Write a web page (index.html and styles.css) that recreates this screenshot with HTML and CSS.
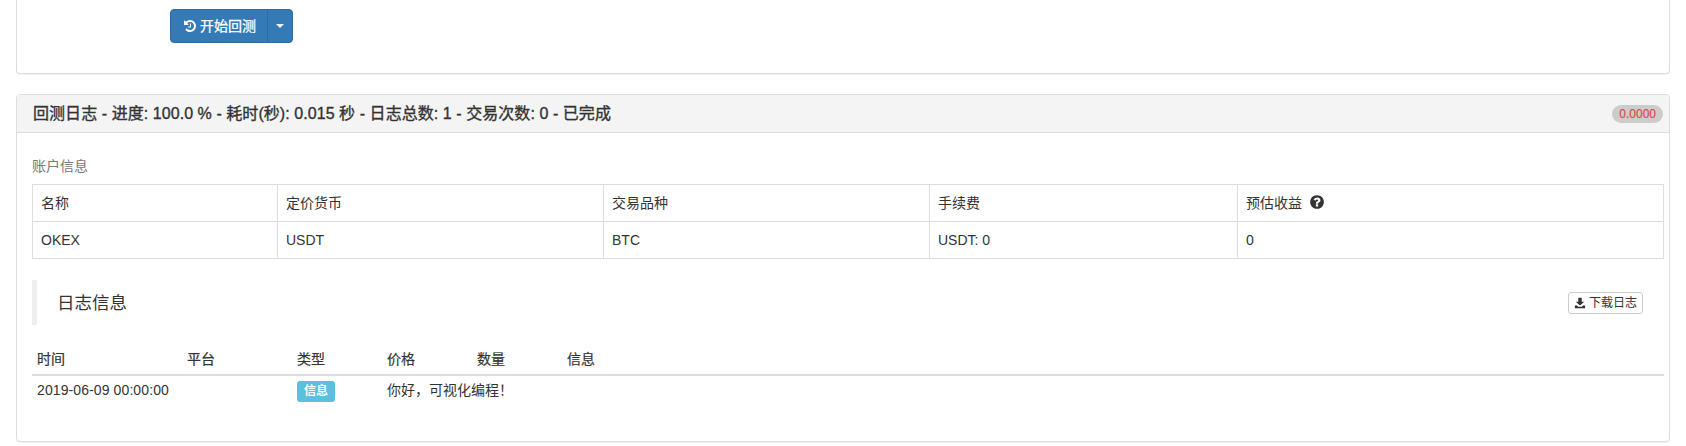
FILE: index.html
```html
<!DOCTYPE html>
<html lang="zh-CN">
<head>
<meta charset="utf-8">
<title>回测日志</title>
<link rel="stylesheet" href="styles.css">
</head>
<body>
<main class="page">
  <section class="panel panel-top">
    <div class="btn-group">
      <button class="btn btn-primary btn-main" type="button">
        <svg class="icon" viewBox="0 0 1792 1792" aria-hidden="true"><path fill="currentColor" d="M1664 896q0 156-61 298t-164 245-245 164-298 61q-172 0-327-72.5t-264-204.5q-7-10-6.5-22.5t8.5-20.5l137-138q10-9 25-9 16 2 23 12 73 95 179 147t225 52q104 0 198.5-40.5t163.5-109.5 109.5-163.5 40.5-198.5-40.5-198.5-109.5-163.5-163.5-109.5-198.5-40.5q-98 0-188 35.5t-160 101.5l137 138q31 30 14 69-17 40-59 40h-448q-26 0-45-19t-19-45v-448q0-42 40-59 39-17 69 14l130 129q107-101 244.5-156.5t284.5-55.5q156 0 298 61t245 164 164 245 61 298zm-640-288v448q0 14-9 23t-23 9h-320q-14 0-23-9t-9-23v-64q0-14 9-23t23-9h224v-352q0-14 9-23t23-9h64q14 0 23 9t9 23z"/></svg>
        开始回测
      </button>
      <button class="btn btn-primary btn-caret" type="button" aria-label="更多"><span class="caret"></span></button>
    </div>
  </section>

  <section class="panel">
    <header class="panel-heading">
      <h3 class="panel-title">回测日志 - 进度: 100.0 % - 耗时(秒): 0.015 秒 - 日志总数: 1 - 交易次数: 0 - 已完成</h3>
      <span class="badge">0.0000</span>
    </header>
    <div class="panel-body">
      <p class="caption">账户信息</p>
      <table class="account-table">
        <colgroup>
          <col class="col-a"><col class="col-b"><col class="col-c"><col class="col-d"><col>
        </colgroup>
        <tbody>
          <tr>
            <td>名称</td><td>定价货币</td><td>交易品种</td><td>手续费</td>
            <td>预估收益
              <svg class="help" viewBox="0 0 1792 1792" aria-hidden="true"><path fill="currentColor" d="M1024 1376v-192q0-14-9-23t-23-9h-192q-14 0-23 9t-9 23v192q0 14 9 23t23 9h192q14 0 23-9t9-23zm256-672q0-88-55.5-163t-138.5-116-170-41q-243 0-371 213-15 24 8 42l132 100q7 6 19 6 16 0 25-12 53-68 86-92 34-24 86-24 48 0 85.5 26t37.5 59q0 38-20 61t-68 45q-63 28-115.5 86.5t-52.5 125.5v36q0 14 9 23t23 9h192q14 0 23-9t9-23q0-19 21.5-49.5t54.5-49.5q32-18 49-28.5t46-35 44.5-48 28-60.5 12.5-81zm384 192q0 209-103 385.5t-279.5 279.5-385.5 103-385.5-103-279.5-279.5-103-385.5 103-385.5 279.5-279.5 385.5-103 385.5 103 279.5 279.5 103 385.5z"/></svg>
            </td>
          </tr>
          <tr><td>OKEX</td><td>USDT</td><td>BTC</td><td>USDT: 0</td><td>0</td></tr>
        </tbody>
      </table>

      <div class="section-head">
        <h4 class="section-title">日志信息</h4>
        <button class="btn-xs" type="button">
          <svg class="dl" viewBox="0 0 14 14" aria-hidden="true"><path fill="currentColor" d="M5 1h4v4.500h3L7 10 2 5.500h3zM1 10h2.500L5 11.500h4L10.500 10H13v3H1z"/></svg>
          下载日志
        </button>
      </div>

      <table class="log-table">
        <colgroup>
          <col class="log-time"><col class="log-platform"><col class="log-type"><col class="log-price"><col class="log-qty"><col>
        </colgroup>
        <thead>
          <tr><th>时间</th><th>平台</th><th>类型</th><th>价格</th><th>数量</th><th>信息</th></tr>
        </thead>
        <tbody>
          <tr>
            <td class="date">2019-06-09 00:00:00</td><td></td><td><span class="label">信息</span></td>
            <td class="msg" colspan="3">你好，可视化编程！</td>
          </tr>
        </tbody>
      </table>
    </div>
  </section>
</main>
</body>
</html>
```

FILE: styles.css
```css
* { box-sizing: border-box; }
html, body { margin: 0; padding: 0; background: #fff; }
body {
  font-family: "Liberation Sans", "Noto Sans CJK SC", sans-serif;
  font-size: 14px;
  line-height: 20px;
  color: #333;
}
.page { padding: 0 16px; }

.panel {
  border: 1px solid #ddd;
  border-radius: 4px;
  background: #fff;
  box-shadow: 0 1px 1px rgba(0, 0, 0, .05);
  margin-bottom: 20px;
}
.panel-top {
  height: 74px;
  padding: 9px 0 0 153px;
  border-top: 0;
  border-top-left-radius: 0;
  border-top-right-radius: 0;
}

.btn-group { display: flex; }
.btn {
  height: 34px;
  font: inherit;
  color: #fff;
  background: #337ab7;
  border: 1px solid #2e6da4;
  cursor: pointer;
}
.btn-main {
  display: flex;
  align-items: center;
  gap: 3px;
  width: 98px;
  padding: 0 0 0 12px;
  border-radius: 4px 0 0 4px;
  -webkit-text-stroke: .25px #fff;
}
.btn-caret {
  display: flex;
  align-items: center;
  justify-content: center;
  width: 26px;
  margin-left: -1px;
  padding: 0;
  border-radius: 0 4px 4px 0;
}
.icon { width: 14px; height: 14px; flex: none; }
.caret {
  width: 0;
  height: 0;
  border-top: 4px solid #fff;
  border-left: 4px solid transparent;
  border-right: 4px solid transparent;
}

.panel-heading {
  display: flex;
  align-items: center;
  justify-content: space-between;
  height: 38px;
  padding: 0 6px 0 16px;
  background: #f4f4f4;
  border-bottom: 1px solid #ddd;
  border-radius: 3px 3px 0 0;
}
.panel-title {
  margin: 0;
  font-size: 16px;
  font-weight: 400;
  letter-spacing: .06px;
  color: #333;
  -webkit-text-stroke: .35px #333;
}
.badge {
  height: 18px;
  padding: 0 7px;
  font-size: 12px;
  line-height: 18px;
  color: #de4b4b;
  background: #ccc;
  border-radius: 10px;
  -webkit-text-stroke: .2px #de4b4b;
}

.panel-body { padding: 23px 5px 0 15px; height: 308px; }
.caption { margin: 0 0 8px; color: #777; line-height: 20px; }

.account-table {
  width: 100%;
  table-layout: fixed;
  border-collapse: collapse;
}
.col-a { width: 245px; }
.col-b { width: 326px; }
.col-c { width: 326px; }
.col-d { width: 308px; }
.account-table td {
  height: 37px;
  padding: 8px;
  border: 1px solid #ddd;
}
.help { width: 16px; height: 16px; margin-left: 3px; vertical-align: -2px; }

.section-head {
  display: flex;
  align-items: center;
  justify-content: space-between;
  height: 45px;
  margin-top: 21px;
  padding: 0 21px 0 20px;
  border-left: 5px solid #eee;
}
.section-title {
  margin: 0;
  font-size: 17.5px;
  font-weight: 400;
}
.btn-xs {
  display: flex;
  align-items: center;
  gap: 3px;
  height: 22px;
  padding: 0 5px;
  font: inherit;
  font-size: 12px;
  line-height: 18px;
  color: #333;
  background: #fff;
  border: 1px solid #ccc;
  border-radius: 3px;
  cursor: pointer;
}
.dl { width: 12px; height: 12px; flex: none; }

.log-table {
  width: 100%;
  table-layout: fixed;
  border-collapse: collapse;
  margin-top: 19px;
}
.log-time { width: 150px; }
.log-platform { width: 110px; }
.log-type { width: 90px; }
.log-price { width: 90px; }
.log-qty { width: 90px; }
.log-table th {
  height: 31px;
  padding: 0 5px;
  font-weight: 400;
  text-align: left;
  border-bottom: 2px solid #ddd;
  -webkit-text-stroke: .2px #333;
}
.log-table td { padding: 4px 5px 5px; vertical-align: top; }
.log-table .date { letter-spacing: .1px; white-space: nowrap; }
.label {
  display: inline-block;
  height: 21px;
  margin-top: 1px;
  padding: 0 7px;
  font-size: 12px;
  font-weight: 700;
  line-height: 21px;
  color: #fff;
  background: #5bc0de;
  border-radius: 3px;
}
```
